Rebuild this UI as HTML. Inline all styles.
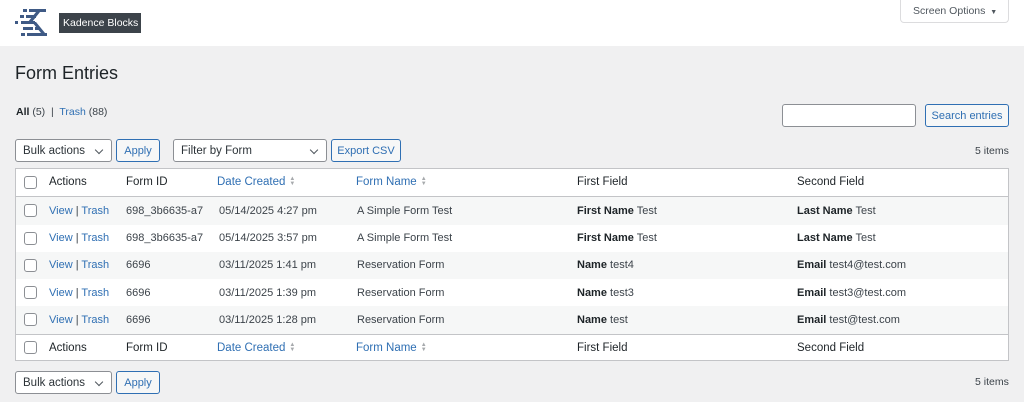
<!DOCTYPE html>
<html><head><meta charset="utf-8"><style>
*{box-sizing:border-box;margin:0;padding:0}
body{width:1024px;height:402px;background:#f0f0f1;font-family:"Liberation Sans",sans-serif;font-size:11px;color:#3c434a;position:relative;overflow:hidden}
.a{position:absolute;white-space:nowrap}
.top{left:0;top:0;width:1024px;height:46px;background:#fff}
.blue{color:#2f6fb3}
.btn{position:absolute;border:1px solid #2f6fb3;border-radius:3px;color:#2f6fb3;background:#f6f7f7;display:flex;align-items:center;justify-content:center;font-size:11px;white-space:nowrap}
.sel{position:absolute;border:1px solid #8c8f94;border-radius:3px;background:#fff;color:#2c3338;font-size:11.5px;padding-left:7px;display:flex;align-items:center}
.sel:after{content:"";position:absolute;right:9px;top:7px;width:5px;height:5px;border-right:1.3px solid #50575e;border-bottom:1.3px solid #50575e;transform:rotate(45deg)}
.tbl{left:15px;top:168px;width:994px;height:193px;background:#fff;border:1px solid #c3c4c7}
.row{position:absolute;left:0;width:992px;height:27.5px}
.row span{position:absolute;top:50%;transform:translateY(-50%);white-space:nowrap}
.cb{position:absolute;left:8px;top:50%;margin-top:-6.5px;width:13px;height:13px;border:1px solid #8c8f94;border-radius:3px;background:#fff}
.s{background:#f6f7f7}
.arr{display:inline-block;color:#a7aaad;font-size:6px;line-height:5px;vertical-align:middle;margin-left:4px;font-style:normal}
b{color:#1d2327;font-weight:bold}
.h span{font-size:11.5px;color:#1d2327}
</style></head><body>
<div class="a top"></div>
<svg class="a" style="left:14px;top:8px" width="34" height="28" viewBox="0 0 34 28">
<g fill="#3f5a85">
<rect x="9" y="1" width="4" height="3"/><rect x="15" y="1" width="17" height="3"/>
<rect x="6" y="7" width="4" height="3"/><rect x="12" y="7" width="10" height="3"/>
<rect x="1" y="13" width="3" height="3"/><rect x="7" y="13" width="14" height="3"/>
<rect x="9" y="19" width="10" height="3"/><rect x="21" y="19" width="5" height="3"/>
<rect x="7" y="25" width="4" height="3"/><rect x="13" y="25" width="20" height="3"/>
<polygon points="22,4 26,4 18,14 14,14"/><polygon points="18,14 22,14 31,25 27,25"/>
</g></svg>
<div class="a" style="left:59px;top:13px;width:82px;height:20px;background:#3c434a;color:#fff;font-size:10.5px;line-height:20px;padding-left:4px;overflow:hidden">Kadence Blocks</div>
<div class="a" style="left:900px;top:0;width:109px;height:23px;background:#fff;border:1px solid #dcdcde;border-top:none;border-radius:0 0 4px 4px;color:#50575e;font-size:10.5px;line-height:22px;padding-left:12px">Screen Options <span style="font-size:7px;margin-left:2px">▼</span></div>
<div class="a" style="left:15px;top:63px;font-size:18px;color:#1d2327">Form Entries</div>
<div class="a" style="left:16px;top:106px;font-size:10.5px"><b>All</b> (5) &nbsp;|&nbsp; <span class="blue">Trash</span> (88)</div>
<div class="a" style="left:782px;top:104px;width:134px;height:23px;background:#fff;border:1px solid #8c8f94;border-radius:3px"></div>
<div class="btn" style="left:925px;top:104px;width:84px;height:23px">Search entries</div>
<div class="sel" style="left:15px;top:139px;width:97px;height:23px">Bulk actions</div>
<div class="btn" style="left:116px;top:139px;width:44px;height:23px">Apply</div>
<div class="sel" style="left:173px;top:139px;width:154px;height:23px">Filter by Form</div>
<div class="btn" style="left:331px;top:139px;width:70px;height:23px">Export CSV</div>
<div class="a" style="left:975px;top:145px;font-size:10.5px">5 items</div>
<div class="a tbl">
<div class="row h" style="top:0;border-bottom:1px solid #c3c4c7"><div class="cb"></div><span style="left:33px">Actions</span><span style="left:110px">Form ID</span><span style="left:201px;color:#2f6fb3">Date Created<i class="arr">▲<br>▼</i></span><span style="left:340px;color:#2f6fb3">Form Name<i class="arr">▲<br>▼</i></span><span style="left:561px">First Field</span><span style="left:781px">Second Field</span></div>
<div class="row s" style="top:28px"><div class="cb"></div><span style="left:33px" class="blue">View <span style="position:static;transform:none;color:#3c434a">|</span> Trash</span><span style="left:110px">698_3b6635-a7</span><span style="left:203px">05/14/2025 4:27 pm</span><span style="left:341px">A Simple Form Test</span><span style="left:561px"><b>First Name</b> Test</span><span style="left:781px"><b>Last Name</b> Test</span></div>
<div class="row" style="top:55.5px"><div class="cb"></div><span style="left:33px" class="blue">View <span style="position:static;transform:none;color:#3c434a">|</span> Trash</span><span style="left:110px">698_3b6635-a7</span><span style="left:203px">05/14/2025 3:57 pm</span><span style="left:341px">A Simple Form Test</span><span style="left:561px"><b>First Name</b> Test</span><span style="left:781px"><b>Last Name</b> Test</span></div>
<div class="row s" style="top:82.5px"><div class="cb"></div><span style="left:33px" class="blue">View <span style="position:static;transform:none;color:#3c434a">|</span> Trash</span><span style="left:110px">6696</span><span style="left:203px">03/11/2025 1:41 pm</span><span style="left:341px">Reservation Form</span><span style="left:561px"><b>Name</b> test4</span><span style="left:781px"><b>Email</b> test4@test.com</span></div>
<div class="row" style="top:110px"><div class="cb"></div><span style="left:33px" class="blue">View <span style="position:static;transform:none;color:#3c434a">|</span> Trash</span><span style="left:110px">6696</span><span style="left:203px">03/11/2025 1:39 pm</span><span style="left:341px">Reservation Form</span><span style="left:561px"><b>Name</b> test3</span><span style="left:781px"><b>Email</b> test3@test.com</span></div>
<div class="row s" style="top:137px"><div class="cb"></div><span style="left:33px" class="blue">View <span style="position:static;transform:none;color:#3c434a">|</span> Trash</span><span style="left:110px">6696</span><span style="left:203px">03/11/2025 1:28 pm</span><span style="left:341px">Reservation Form</span><span style="left:561px"><b>Name</b> test</span><span style="left:781px"><b>Email</b> test@test.com</span></div>
<div class="row h" style="top:164.5px;border-top:1px solid #c3c4c7"><div class="cb"></div><span style="left:33px">Actions</span><span style="left:110px">Form ID</span><span style="left:201px;color:#2f6fb3">Date Created<i class="arr">▲<br>▼</i></span><span style="left:340px;color:#2f6fb3">Form Name<i class="arr">▲<br>▼</i></span><span style="left:561px">First Field</span><span style="left:781px">Second Field</span></div>
</div>
<div class="sel" style="left:15px;top:371px;width:97px;height:23px">Bulk actions</div>
<div class="btn" style="left:116px;top:371px;width:44px;height:23px">Apply</div>
<div class="a" style="left:975px;top:376px;font-size:10.5px">5 items</div>
</body></html>
